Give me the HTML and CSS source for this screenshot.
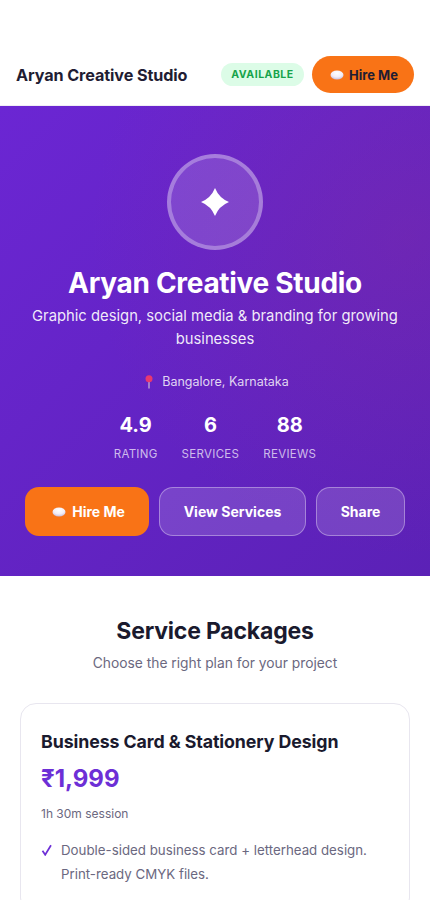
FILE: index.html
```html
<!DOCTYPE html>
<html lang="en">
<head>
<meta charset="utf-8">
<title>Aryan Creative Studio</title>
<link rel="stylesheet" href="styles.css">
</head>
<body>
<svg class="defs" width="0" height="0"><defs><radialGradient id="blobfill" cx="50%" cy="30%" r="70%"><stop offset="0" stop-color="#ffffff"/><stop offset=".6" stop-color="#f3eef8"/><stop offset="1" stop-color="#c8bedd"/></radialGradient></defs></svg>
<header class="nav">
  <div class="brand">Aryan Creative Studio</div>
  <div class="nav-actions">
    <span class="badge">AVAILABLE</span>
    <a class="nav-btn"><svg class="blob" viewBox="0 0 14 10"><ellipse cx="7" cy="5" rx="6.500" ry="4.500" fill="url(#blobfill)"/></svg>Hire Me</a>
  </div>
</header>
<section class="hero">
  <div class="avatar">
    <svg class="star" viewBox="0 0 28 28"><path d="M14 0Q18 10 28 14Q18 18 14 28Q10 18 0 14Q10 10 14 0Z" fill="#fff"/></svg>
  </div>
  <h1 class="hero-title">Aryan Creative Studio</h1>
  <p class="hero-sub">Graphic design, social media &amp; branding for growing businesses</p>
  <p class="location"><svg class="pin" viewBox="0 0 10 14"><path d="M5 6.500V13.500" stroke="#d8c8d8" stroke-width="1.100"/><circle cx="5" cy="3.800" r="3.500" fill="#e8386f"/></svg>Bangalore, Karnataka</p>
  <div class="stats">
    <div class="stat"><b>4.9</b><span>RATING</span></div>
    <div class="stat"><b>6</b><span>SERVICES</span></div>
    <div class="stat"><b>88</b><span>REVIEWS</span></div>
  </div>
  <div class="cta">
    <a class="btn btn-primary"><svg class="blob" viewBox="0 0 14 10"><ellipse cx="7" cy="5" rx="6.500" ry="4.500" fill="url(#blobfill)"/></svg>Hire Me</a>
    <a class="btn btn-ghost">View Services</a>
    <a class="btn btn-ghost">Share</a>
  </div>
</section>
<section class="packages">
  <h2 class="sec-title">Service Packages</h2>
  <p class="sec-sub">Choose the right plan for your project</p>
  <article class="card">
    <h3 class="card-title">Business Card &amp; Stationery Design</h3>
    <div class="price">₹1,999</div>
    <div class="duration">1h 30m session</div>
    <div class="feature"><svg class="check" viewBox="0 0 12 12"><path d="M1.500 6.800L4.200 10.800L10 1.200" fill="none" stroke="#6d2fd6" stroke-width="1.700"/></svg><span>Double-sided business card + letterhead design. Print-ready CMYK files.</span></div>
  </article>
</section>
</body>
</html>
```
FILE: styles.css
```css
* { box-sizing: border-box; }
html, body { margin: 0; height: 900px; overflow: hidden; }
body { background: #fff; font-family: Inter, "Noto Sans", sans-serif; color: #1a1a2e; }
a { display: inline-flex; align-items: center; justify-content: center; }
.defs { position: absolute; }
.nav { display: flex; align-items: center; justify-content: space-between; padding: 56px 16px 12px; height: 106px; border-bottom: 1px solid #f0eef5; }
.brand { font-size: 16.200px; font-weight: 700; letter-spacing: -0.100px; color: #1f1d33; }
.nav-actions { display: flex; align-items: center; gap: 8px; }
.badge { height: 23px; width: 83px; display: flex; align-items: center; justify-content: center; border-radius: 12px; background: #dcfce7; color: #16a34a; font-size: 10.500px; font-weight: 700; letter-spacing: 0.500px; }
.nav-btn { width: 102px; height: 37px; padding-left: 2px; border-radius: 19px; background: #f97316; color: #1f1d33; font-size: 13px; font-weight: 700; gap: 5px; }
.blob { width: 14px; height: 10px; flex: none; }
.hero { height: 470px; padding-top: 48px; display: flex; flex-direction: column; align-items: center; background: radial-gradient(circle at 95% 28%, rgba(150,50,140,.24) 0, rgba(150,50,140,0) 60%), linear-gradient(135deg, #6b26d3 0%, #5b21b6 100%); color: #fff; text-align: center; }
.avatar { width: 96px; height: 96px; flex: none; border-radius: 50%; border: 4px solid rgba(255,255,255,.3); background: rgba(255,255,255,.15); display: flex; align-items: center; justify-content: center; }
.star { width: 28px; height: 28px; }
.hero-title { margin: 16px 0 0; font-size: 28px; line-height: 34px; font-weight: 700; letter-spacing: -0.300px; }
.hero-sub { margin: 5px 0 0; padding: 0 24px; font-size: 14.800px; line-height: 22.500px; color: rgba(255,255,255,.92); }
.location { margin: 23px 0 0; padding-left: 3px; font-size: 12.500px; line-height: 18px; color: rgba(255,255,255,.82); display: flex; align-items: center; gap: 8px; }
.pin { width: 10px; height: 14px; }
.stats { margin-top: 21px; display: flex; justify-content: center; gap: 24px; }
.stat { display: flex; flex-direction: column; align-items: center; }
.stat b { font-size: 20px; line-height: 26px; font-weight: 700; }
.stat span { margin-top: 8px; font-size: 11.500px; line-height: 16px; letter-spacing: 0.300px; color: rgba(255,255,255,.7); }
.cta { margin-top: 25px; display: grid; grid-template-columns: 124px 147px 89px; gap: 10px; }
.btn { height: 49px; border-radius: 14px; font-size: 14px; font-weight: 700; color: #fff; gap: 6px; }
.btn-primary { background: #f97316; padding-left: 3px; }
.btn-ghost { background: rgba(255,255,255,.15); border: 1px solid rgba(255,255,255,.35); }
.packages { padding: 40px 20px 0; }
.sec-title { margin: 0; font-size: 23px; line-height: 30px; font-weight: 700; text-align: center; letter-spacing: -0.200px; color: #1a1a2e; }
.sec-sub { margin: 7px 0 0; font-size: 13.800px; line-height: 20px; text-align: center; color: #6b6880; }
.card { margin-top: 30px; border: 1px solid #e8e6ef; border-radius: 16px; padding: 27px 20px; }
.card-title { margin: 0; font-size: 17.800px; line-height: 22px; font-weight: 700; color: #1a1a2e; letter-spacing: -0.100px; }
.price { margin-top: 10px; font-size: 24px; line-height: 32px; font-weight: 700; color: #6d2fd6; }
.duration { margin-top: 10px; font-size: 12px; line-height: 18px; color: #6b6880; }
.feature { margin-top: 15px; display: flex; gap: 8px; font-size: 13.300px; line-height: 24px; color: #6b6880; }
.check { width: 12px; height: 12px; flex: none; margin-top: 6px; }
```
